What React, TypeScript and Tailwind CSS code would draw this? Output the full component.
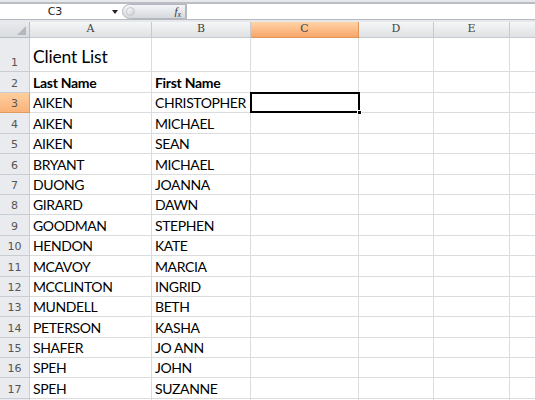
import React from "react";

const COLS = [
  { key: "A", w: 122 },
  { key: "B", w: 99 },
  { key: "C", w: 108 },
  { key: "D", w: 75 },
  { key: "E", w: 76 },
  { key: "F", w: 64 },
];

const ROWS: [string, string][] = [
  ["AIKEN", "CHRISTOPHER"],
  ["AIKEN", "MICHAEL"],
  ["AIKEN", "SEAN"],
  ["BRYANT", "MICHAEL"],
  ["DUONG", "JOANNA"],
  ["GIRARD", "DAWN"],
  ["GOODMAN", "STEPHEN"],
  ["HENDON", "KATE"],
  ["MCAVOY", "MARCIA"],
  ["MCCLINTON", "INGRID"],
  ["MUNDELL", "BETH"],
  ["PETERSON", "KASHA"],
  ["SHAFER", "JO ANN"],
  ["SPEH", "JOHN"],
  ["SPEH", "SUZANNE"],
];

const cellFont = { fontFamily: "Lato, 'Open Sans', sans-serif" };

function RowHead({ n, active }: { n?: number; active?: boolean }) {
  return (
    <div
      className={
        "w-[30px] shrink-0 flex items-end justify-center pb-[1px] leading-[14px] border-r border-b text-[11px] text-[#555] " +
        (active
          ? "bg-gradient-to-b from-[#ffcf9c] to-[#f9b27a] border-[#e29b5d]"
          : "bg-[#e9ebee] border-[#c9ccd0]")
      }
      style={{ fontFamily: "'DejaVu Sans', sans-serif" }}
    >
      {n}
    </div>
  );
}

function Cell({
  w,
  children,
  className = "",
}: {
  w: number;
  children?: React.ReactNode;
  className?: string;
}) {
  return (
    <div
      className={
        "shrink-0 flex items-end pl-[3px] border-r border-b border-[#dadcdd] whitespace-nowrap text-black " +
        className
      }
      style={{ width: w, ...cellFont }}
    >
      {children}
    </div>
  );
}

export default function App() {
  return (
    <div className="w-[535px] h-[400px] overflow-hidden bg-white relative">
      {/* top strip */}
      <div className="h-[4px] bg-[#e6e8eb] border-b-2 border-[#babec4]" />

      {/* formula bar */}
      <div className="h-[16px] flex border-b border-[#b5b9bf] bg-white">
        <div className="w-[122px] shrink-0 flex items-center">
          <span
            className="w-[110px] shrink-0 text-center text-[11px] leading-none text-[#222]"
            style={{ fontFamily: "'DejaVu Sans', sans-serif" }}
          >
            C3
          </span>
          <svg className="shrink-0 ml-[2px]" width="6" height="4" viewBox="0 0 6 4">
            <path d="M0 0 H6 L3 4 Z" fill="#222" />
          </svg>
        </div>
        <div className="w-[64px] shrink-0 h-[15px] rounded-l-full bg-gradient-to-b from-[#f4f5f7] to-[#d6d9dd] border border-[#b3b7bd] flex items-center justify-between pl-[3px] pr-[4px]">
          <div className="w-[9px] h-[9px] rounded-full bg-gradient-to-br from-[#ffffff] to-[#c9ccd1] border border-[#c4c7cc]" />
          <span
            className="italic text-[11px] text-[#333] leading-none"
            style={{ fontFamily: "'Liberation Serif', serif" }}
          >
            f<sub className="text-[8px]">x</sub>
          </span>
        </div>
        <div className="flex-1 border-l border-[#b5b9bf] bg-white" />
      </div>
      <div className="h-[2px] bg-[#e6e8eb]" />

      {/* column header row */}
      <div className="h-[16px] flex">
        <div className="w-[30px] shrink-0 relative bg-gradient-to-b from-[#e8eaed] to-[#d9dce0] border-r border-b border-[#b9bcc1]">
          <svg className="absolute right-[3px] bottom-[2px]" width="9" height="9" viewBox="0 0 9 9">
            <path d="M9 0 V9 H0 Z" fill="#b4b8be" />
          </svg>
        </div>
        {COLS.map((c) => (
          <div
            key={c.key}
            className={
              "shrink-0 flex items-center justify-center border-r border-b text-[11px] text-[#444] " +
              (c.key === "C"
                ? "bg-gradient-to-b from-[#ffd3a6] to-[#f8a66a] border-[#e0955a]"
                : "bg-gradient-to-b from-[#f5f6f7] to-[#dfe1e4] border-[#c5c8cc]")
            }
            style={{ width: c.w, fontFamily: "'DejaVu Serif', serif" }}
          >
            {c.key === "F" ? "" : c.key}
          </div>
        ))}
      </div>

      {/* row 1 */}
      <div className="h-[34px] flex">
        <RowHead n={1} />
        <Cell w={122} className="text-[17.5px] tracking-[-0.2px] leading-[22px] pb-[3px]">
          Client List
        </Cell>
        {COLS.slice(1).map((c) => (
          <Cell key={c.key} w={c.w} />
        ))}
      </div>

      {/* row 2 */}
      <div className="h-[21px] flex">
        <RowHead n={2} />
        <Cell w={122} className="text-[14px] leading-[18px] font-bold tracking-[-0.3px]">
          Last Name
        </Cell>
        <Cell w={99} className="text-[14px] leading-[18px] font-bold tracking-[-0.3px]">
          First Name
        </Cell>
        {COLS.slice(2).map((c) => (
          <Cell key={c.key} w={c.w} />
        ))}
      </div>

      {ROWS.map(([last, first], i) => (
        <div key={i} className="h-[20.4px] flex">
          <RowHead n={i + 3} active={i === 0} />
          <Cell w={122} className="text-[14px] leading-[18px] tracking-[-0.4px]">
            {last}
          </Cell>
          <Cell w={99} className="text-[14px] leading-[18px] tracking-[-0.4px]">
            {first}
          </Cell>
          {COLS.slice(2).map((c) => (
            <Cell key={c.key} w={c.w} />
          ))}
        </div>
      ))}

      {/* row 18, mostly below the fold */}
      <div className="h-[20px] flex">
        <RowHead />
        {COLS.map((c) => (
          <Cell key={c.key} w={c.w} />
        ))}
      </div>

      {/* active cell C3 */}
      <div className="absolute left-[250px] top-[92px] w-[110px] h-[21px] border-2 border-black pointer-events-none">
        <div className="absolute -right-[4px] -bottom-[4px] w-[5px] h-[5px] bg-black border border-white" />
      </div>
    </div>
  );
}
